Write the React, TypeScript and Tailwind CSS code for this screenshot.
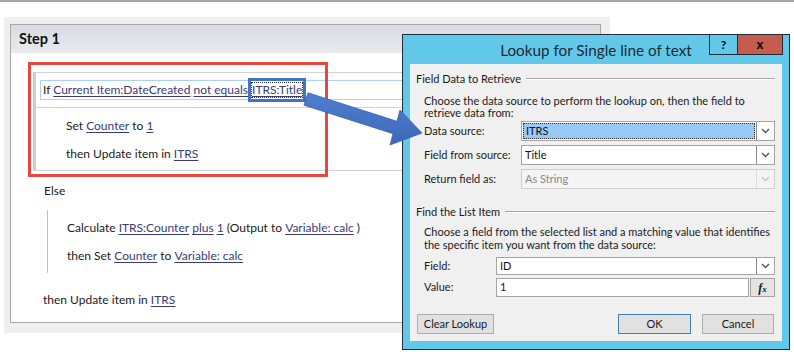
import React from 'react';

const L = ({ children }: { children: React.ReactNode }) => (
  <span className="text-[#3b3a78] underline decoration-[#3b3a78] underline-offset-2">{children}</span>
);

const Chevron = ({ light }: { light?: boolean }) => (
  <svg width="9" height="6" viewBox="0 0 9 6">
    <path d="M1 1 L4.5 4.5 L8 1" fill="none" stroke={light ? '#c4c4c4' : '#555'} strokeWidth="1.4" />
  </svg>
);

const DropBox = ({
  value,
  selected,
  disabled,
}: {
  value: string;
  selected?: boolean;
  disabled?: boolean;
}) => (
  <div
    className={`flex-1 h-full flex items-stretch border ${
      disabled ? 'border-[#cfcfcf] bg-[#f4f4f4]' : 'border-[#a5a5a5] bg-white'
    }`}
  >
    <div className={`flex-1 flex items-center ${selected ? 'p-[1px]' : ''}`}>
      {selected ? (
        <div className="w-full h-full bg-[#99c9f7] border border-dotted border-[#333] flex items-center pl-[2px] text-[#111]">
          {value}
        </div>
      ) : (
        <span className={`pl-[3px] ${disabled ? 'text-[#8a8a8a]' : 'text-[#111]'}`}>{value}</span>
      )}
    </div>
    <div
      className={`w-[18px] flex items-center justify-center border-l ${
        disabled ? 'border-[#dcdcdc]' : 'border-[#8c8c8c]'
      }`}
    >
      <Chevron light={disabled} />
    </div>
  </div>
);

const GroupHeader = ({ title }: { title: string }) => (
  <div className="flex items-center h-[14px] pl-[6px] pr-[7px] gap-[5px]">
    <span>{title}</span>
    <div className="flex-1 h-[2px] border-t border-[#a6a6a6] border-b border-b-white" />
  </div>
);

const Row = ({
  label,
  labelW,
  h = 'h-[20px]',
  children,
}: {
  label: string;
  labelW: string;
  h?: string;
  children: React.ReactNode;
}) => (
  <div className={`flex items-center ${h} pl-[14px] pr-[7px]`}>
    <div className={labelW}>{label}</div>
    {children}
  </div>
);

const Dialog = () => (
  <div className="absolute left-[402px] top-[34px] w-[388px] h-[316px] bg-[#62c8ea] border border-[#1f2d36] flex flex-col">
    <div className="relative h-[29px] flex items-center justify-center">
      <span className="text-[15.25px] text-[#1b2a33] mt-[2px]">Lookup for Single line of text</span>
      <div className="absolute right-[6px] top-[-1px] flex h-[21px]">
        <div className="w-[29px] border border-[#1f2d36] flex items-center justify-center font-bold text-[12px] text-black">
          ?
        </div>
        <div className="w-[45px] bg-[#c65b4e] border border-[#1f2d36] border-l-0 flex items-center justify-center font-bold text-[13px] text-black">
          x
        </div>
      </div>
    </div>
    <div className="mx-[7px] mb-[8px] flex-1 bg-[#f0f0f0] text-[11px] text-[#1a1a1a] flex flex-col">
      <div className="mt-[8px]">
        <GroupHeader title="Field Data to Retrieve" />
      </div>
      <div className="mt-[9px] pl-[14px] leading-[12px] whitespace-nowrap">
        Choose the data source to perform the lookup on, then the field to
        <br />
        retrieve data from:
      </div>
      <div className="mt-[2px] flex flex-col gap-[4px]">
        <Row label="Data source:" labelW="w-[97px]">
          <DropBox value="ITRS" selected />
        </Row>
        <Row label="Field from source:" labelW="w-[97px]">
          <DropBox value="Title" />
        </Row>
        <Row label="Return field as:" labelW="w-[97px]">
          <DropBox value="As String" disabled />
        </Row>
      </div>
      <div className="mt-[16px]">
        <GroupHeader title="Find the List Item" />
      </div>
      <div className="mt-[7px] pl-[14px] leading-[12.5px] whitespace-nowrap">
        Choose a field from the selected list and a matching value that identifies
        <br />
        the specific item you want from the data source:
      </div>
      <div className="mt-[6px] flex flex-col gap-[3px]">
        <Row label="Field:" labelW="w-[72px]" h="h-[18px]">
          <DropBox value="ID" />
        </Row>
        <Row label="Value:" labelW="w-[72px]" h="h-[19px]">
          <div className="flex-1 h-full border border-[#a5a5a5] bg-white flex items-center pl-[3px]">1</div>
          <div className="w-[25px] h-full ml-[1px] border border-[#a5a5a5] bg-[#e3e3e3] flex items-center justify-center font-['Liberation_Serif'] italic font-bold text-[12px]">
            f<span className="text-[9px] mt-[4px]">x</span>
          </div>
        </Row>
      </div>
      <div className="mt-[17px] flex items-center pl-[7px] pr-[8px] h-[20px]">
        <button className="w-[77px] h-full border border-[#adadad] bg-[#e1e1e1]">Clear Lookup</button>
        <div className="flex-1" />
        <button className="w-[73px] h-full border border-[#3c7fb1] bg-[#e1e1e1]">OK</button>
        <button className="w-[72px] h-full ml-[11px] border border-[#adadad] bg-[#e1e1e1]">Cancel</button>
      </div>
    </div>
  </div>
);

const Arrow = () => (
  <svg className="absolute left-0 top-0 pointer-events-none" width="794" height="360">
    <defs>
      <linearGradient id="ag" x1="0" y1="0" x2="0" y2="1">
        <stop offset="0" stopColor="#4f7fd0" />
        <stop offset="1" stopColor="#3d68b8" />
      </linearGradient>
    </defs>
    <polygon
      points="308,92.8 397,121.3 400,110 422,133 390,145 393,133.7 304,105.2"
      fill="url(#ag)"
      stroke="#3a62ad"
      strokeWidth="0.8"
    />
  </svg>
);

export default function App() {
  return (
    <div className="relative w-[794px] h-[360px] bg-white overflow-hidden font-['Lato',sans-serif] text-[12px] text-[#1a1a1a]">
      <div className="h-[2px] bg-[#a2a5a9]" />
      <div className="ml-[4px] mt-[15px] w-[606px] h-[316px] bg-[#efefef] pl-[6px] pt-[7px]">
        <div className="w-[591px] h-[299px] border border-[#a8a8a8] bg-white">
          <div className="h-[28px] bg-gradient-to-b from-[#d8dbe1] to-[#e8eaee] flex items-center pl-[8px] font-bold text-[14.5px] text-[#111]">
            Step 1
          </div>
          <div className="ml-[22px] mr-[10px] mt-[19px] border-t border-b border-[#d2d2d2] border-l-[3px] border-l-[#cbced2]">
            <div className="pt-[7px] pb-[7px] pl-[4px] border-b border-[#d2d2d2]">
              <div className="h-[20px] border border-[#aad4ee] flex items-center pl-[2px] whitespace-nowrap">
                If&nbsp;<L>Current Item:DateCreated</L>&nbsp;<L>not equals</L>
                <span className="inline-flex items-center h-[24px] border-[3px] border-[#4472c4] px-[1px]">
                  <span className="outline outline-1 outline-dotted outline-[#333] leading-[14px]">
                    <L>ITRS:Title</L>
                  </span>
                </span>
              </div>
            </div>
            <div className="pl-[30px] pt-[4px] pb-[2px]">
              <div className="h-[28px] flex items-center">
                Set&nbsp;<L>Counter</L>&nbsp;to&nbsp;<L>1</L>
              </div>
              <div className="h-[28px] flex items-center">
                then Update item in&nbsp;<L>ITRS</L>
              </div>
            </div>
          </div>
          <div className="mt-[10px] ml-[33px] h-[20px] flex items-center">Else</div>
          <div className="mt-[9px] ml-[36px] border-l border-[#c2c2c2] pl-[19px] pt-[4px] pb-[3px]">
            <div className="h-[28px] flex items-center whitespace-nowrap">
              Calculate&nbsp;<L>ITRS:Counter</L>&nbsp;<L>plus</L>&nbsp;<L>1</L>&nbsp;(Output to&nbsp;
              <L>Variable: calc</L>&nbsp;)
            </div>
            <div className="h-[28px] flex items-center whitespace-nowrap">
              then Set&nbsp;<L>Counter</L>&nbsp;to&nbsp;<L>Variable: calc</L>
            </div>
          </div>
          <div className="mt-[17px] ml-[32px] h-[20px] flex items-center">
            then Update item in&nbsp;<L>ITRS</L>
          </div>
        </div>
      </div>
      <div className="absolute left-[28px] top-[62px] w-[300px] h-[115px] border-[3px] border-[#e8473f] pointer-events-none" />
      <Dialog />
      <Arrow />
    </div>
  );
}
